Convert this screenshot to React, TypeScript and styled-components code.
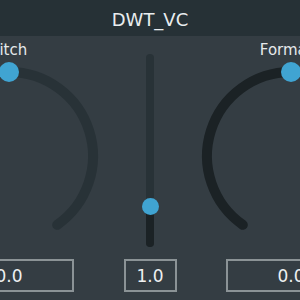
import React from 'react';
import styled, { createGlobalStyle } from 'styled-components';

const Global = createGlobalStyle`
  html, body { margin: 0; padding: 0; background: #343d43; }
  body { width: 300px; height: 300px; overflow: hidden; font-family: "DejaVu Sans", Verdana, sans-serif; }
`;

const Window = styled.div`
  width: 300px;
  height: 300px;
  overflow: hidden;
  background: #343d43;
  display: flex;
  flex-direction: column;
`;

const TitleBar = styled.div`
  height: 36px;
  flex: none;
  background: #263136;
  color: #e9edef;
  font-size: 18px;
  line-height: 40px;
  text-align: center;
  overflow: hidden;
`;

const Panel = styled.div`
  width: 412px;
  margin-left: -56px;
  display: grid;
  grid-template-columns: 130px 1fr 130px;
`;

const KnobColumn = styled.div`
  display: flex;
  flex-direction: column;
  align-items: center;
  padding-top: 5px;
`;

const Label = styled.div`
  font-size: 15px;
  line-height: 18px;
  color: #e6e9eb;
  white-space: nowrap;
`;

const KnobSvg = styled.svg`
  display: block;
  overflow: visible;
`;

const ValueBox = styled.div<{ $w: number; $mt: number }>`
  width: ${(p) => p.$w}px;
  height: 33px;
  margin-top: ${(p) => p.$mt}px;
  box-sizing: border-box;
  border: 2px solid #8b9396;
  color: #eef0f1;
  font-size: 17px;
  display: flex;
  align-items: center;
  justify-content: center;
`;

const SliderColumn = styled.div`
  display: flex;
  flex-direction: column;
  align-items: center;
  padding-top: 18px;
`;

const SliderTrack = styled.div`
  position: relative;
  width: 8px;
  height: 193px;
  border-radius: 4px;
  background: #283237;
`;

const SliderFill = styled.div`
  position: absolute;
  left: 0;
  right: 0;
  bottom: 0;
  border-radius: 4px;
  background: #1b2225;
`;

const SliderThumb = styled.div`
  position: absolute;
  left: 50%;
  width: 17px;
  height: 17px;
  margin-left: -8.5px;
  margin-bottom: -8.5px;
  border-radius: 50%;
  background: #40a4d2;
`;

const CX = 65;
const CY = 97;
const R = 84;
const SPAN = 145;

function pt(a: number) {
  const rad = (a * Math.PI) / 180;
  return [CX + R * Math.sin(rad), CY - R * Math.cos(rad)];
}

function arc(a0: number, a1: number) {
  const [x0, y0] = pt(a0);
  const [x1, y1] = pt(a1);
  const large = a1 - a0 > 180 ? 1 : 0;
  return `M ${x0} ${y0} A ${R} ${R} 0 ${large} 1 ${x1} ${y1}`;
}

function Knob({ label, value }: { label: string; value: number }) {
  const angle = -SPAN + value * 2 * SPAN;
  const [dx, dy] = pt(angle);
  return (
    <KnobColumn>
      <Label>{label}</Label>
      <KnobSvg width={130} height={180} viewBox="0 0 130 180">
        <path d={arc(-SPAN, angle)} stroke="#1b2225" strokeWidth={10} fill="none" strokeLinecap="round" />
        <path d={arc(angle, SPAN)} stroke="#283237" strokeWidth={10} fill="none" strokeLinecap="round" />
        <circle cx={dx} cy={dy} r={10} fill="#40a4d2" />
      </KnobSvg>
      <ValueBox $w={130} $mt={20}>0.0</ValueBox>
    </KnobColumn>
  );
}

export default function App() {
  const thumbBottom = 41;
  return (
    <>
      <Global />
      <Window>
        <TitleBar>DWT_VC</TitleBar>
        <Panel>
          <Knob label="Pitch" value={0.5} />
          <SliderColumn>
            <SliderTrack>
              <SliderFill style={{ height: thumbBottom }} />
              <SliderThumb style={{ bottom: thumbBottom }} />
            </SliderTrack>
            <ValueBox $w={53} $mt={12}>1.0</ValueBox>
          </SliderColumn>
          <Knob label="Formant" value={0.5} />
        </Panel>
      </Window>
    </>
  );
}
